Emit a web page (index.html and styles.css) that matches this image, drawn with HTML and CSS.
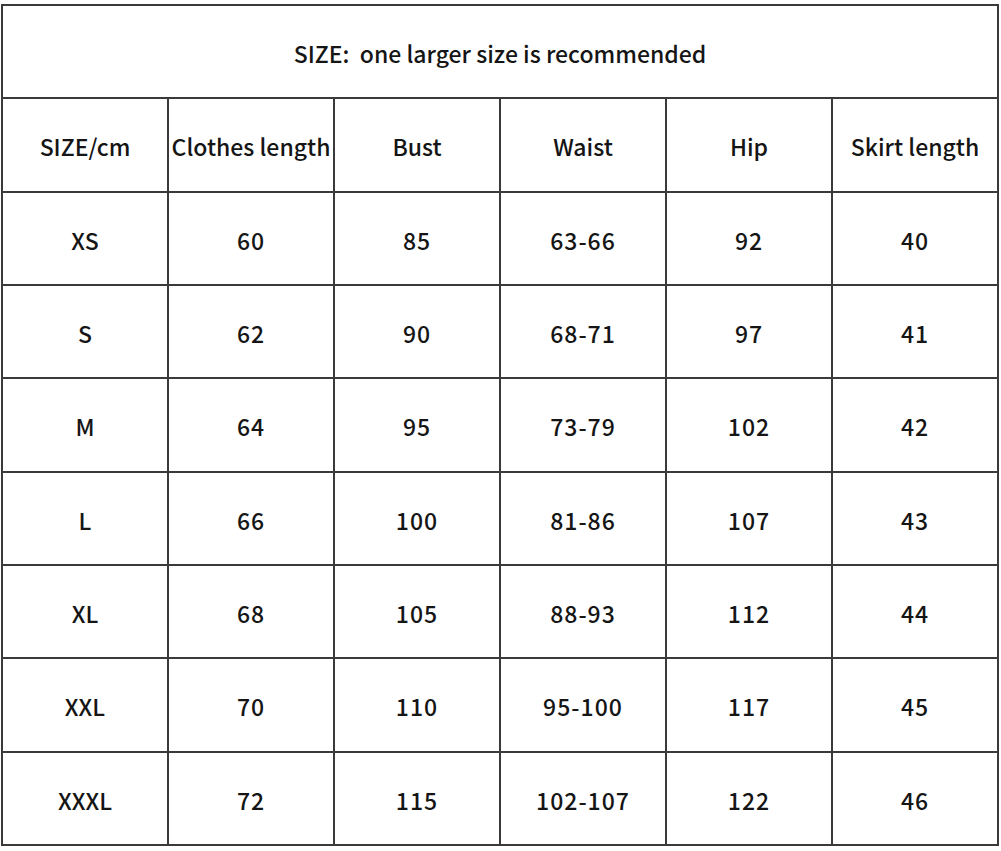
FILE: index.html
```html
<!DOCTYPE html>
<html>
<head>
<meta charset="utf-8">
<link rel="stylesheet" href="styles.css">
</head>
<body>
<div class="chart">
  <div class="cell title">SIZE:&nbsp; one larger size is recommended</div>
  <div class="cell">SIZE/cm</div><div class="cell">Clothes length</div><div class="cell">Bust</div><div class="cell">Waist</div><div class="cell">Hip</div><div class="cell">Skirt length</div>
  <div class="cell">XS</div><div class="cell num">60</div><div class="cell num">85</div><div class="cell num">63-66</div><div class="cell num">92</div><div class="cell num">40</div>
  <div class="cell">S</div><div class="cell num">62</div><div class="cell num">90</div><div class="cell num">68-71</div><div class="cell num">97</div><div class="cell num">41</div>
  <div class="cell">M</div><div class="cell num">64</div><div class="cell num">95</div><div class="cell num">73-79</div><div class="cell num">102</div><div class="cell num">42</div>
  <div class="cell">L</div><div class="cell num">66</div><div class="cell num">100</div><div class="cell num">81-86</div><div class="cell num">107</div><div class="cell num">43</div>
  <div class="cell">XL</div><div class="cell num">68</div><div class="cell num">105</div><div class="cell num">88-93</div><div class="cell num">112</div><div class="cell num">44</div>
  <div class="cell">XXL</div><div class="cell num">70</div><div class="cell num">110</div><div class="cell num">95-100</div><div class="cell num">117</div><div class="cell num">45</div>
  <div class="cell">XXXL</div><div class="cell num">72</div><div class="cell num">115</div><div class="cell num">102-107</div><div class="cell num">122</div><div class="cell num">46</div>
</div>
</body>
</html>
```
FILE: styles.css
```css
html, body {
  margin: 0;
  padding: 0;
  background: #fff;
}
body {
  padding: 4px 0 0 1px;
}
.chart {
  box-sizing: border-box;
  width: 998px;
  height: 842px;
  border-left: 2px solid #3a3a3a;
  border-top: 2px solid #3a3a3a;
  display: grid;
  grid-template-columns: repeat(6, 1fr);
  grid-template-rows: repeat(9, 1fr);
  font-family: "Noto Sans CJK SC", "Noto Sans", sans-serif;
  font-size: 23px;
  font-weight: 500;
  color: #151515;
}
.cell {
  border-right: 2px solid #3a3a3a;
  border-bottom: 2px solid #3a3a3a;
  display: flex;
  align-items: center;
  justify-content: center;
  padding-top: 3px;
  white-space: nowrap;
}
.num {
  letter-spacing: 1px;
}
.title {
  grid-column: 1 / -1;
}
```
